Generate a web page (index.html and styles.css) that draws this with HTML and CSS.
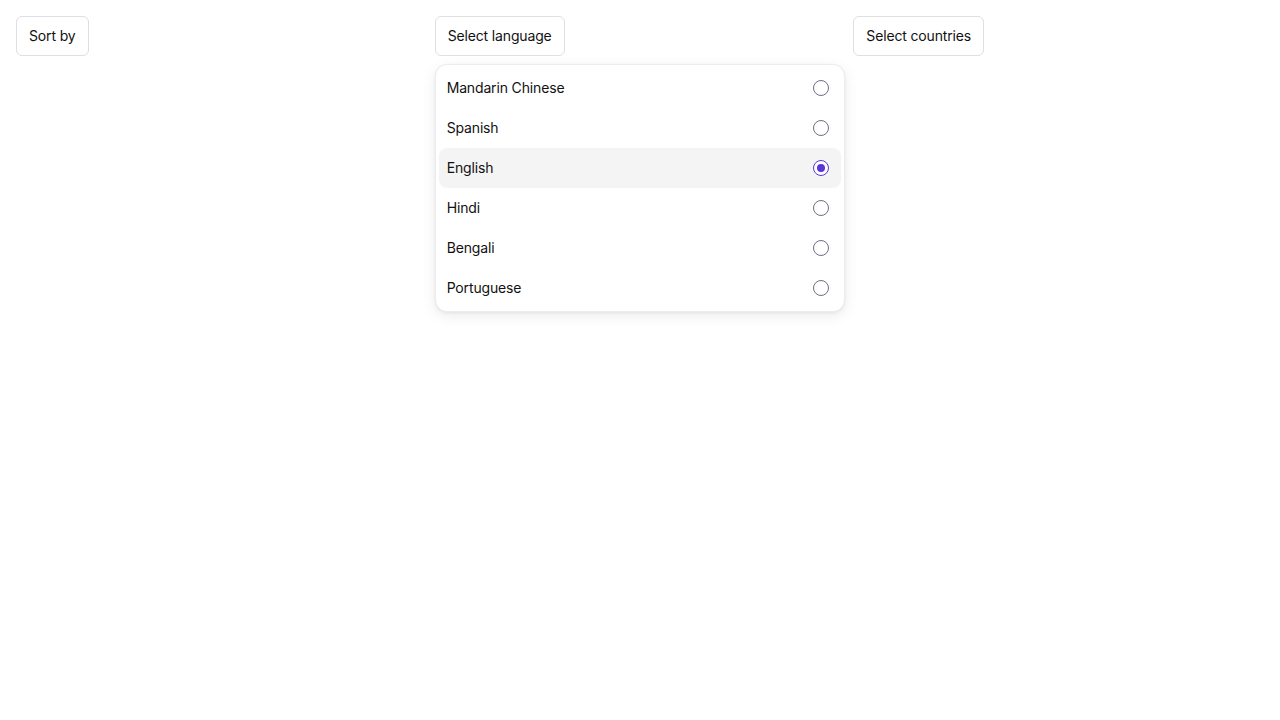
FILE: index.html
```html
<!DOCTYPE html>
<html lang="en">
<head>
<meta charset="utf-8">
<title>Menus</title>
<link rel="stylesheet" href="styles.css">
</head>
<body>
<div class="grid">
  <div class="col">
    <button class="trigger">Sort by</button>
  </div>
  <div class="col">
    <button class="trigger">Select language</button>
    <div class="menu" role="radiogroup">
      <div class="item"><span>Mandarin Chinese</span><span class="radio"></span></div>
      <div class="item"><span>Spanish</span><span class="radio"></span></div>
      <div class="item active"><span>English</span><span class="radio checked"></span></div>
      <div class="item"><span>Hindi</span><span class="radio"></span></div>
      <div class="item"><span>Bengali</span><span class="radio"></span></div>
      <div class="item"><span>Portuguese</span><span class="radio"></span></div>
    </div>
  </div>
  <div class="col">
    <button class="trigger">Select countries</button>
  </div>
</div>
</body>
</html>
```

FILE: styles.css
```css
* { box-sizing: border-box; }
html, body { margin: 0; background: #fff; }
body {
  font-family: Inter, "Noto Sans", sans-serif;
  font-size: 14px;
  letter-spacing: -0.15px;
  color: #111;
  min-height: 720px;
}
.grid {
  display: grid;
  grid-template-columns: repeat(3, 1fr);
  gap: 8px;
  padding: 16px;
  align-items: start;
}
.col {
  display: flex;
  flex-direction: column;
  align-items: flex-start;
  gap: 8px;
}
.trigger {
  height: 40px;
  padding: 0 12px;
  border: 1px solid #dedee3;
  border-radius: 6px;
  background: #fff;
  font-family: inherit;
  font-size: 14px;
  letter-spacing: inherit;
  color: #111;
  line-height: 20px;
}
.menu {
  align-self: stretch;
  background: #fff;
  border: 1px solid #ececef;
  border-radius: 12px;
  padding: 3px;
  box-shadow: 0 4px 14px rgba(0,0,0,0.08), 0 1px 3px rgba(0,0,0,0.06);
}
.item {
  height: 40px;
  display: flex;
  align-items: center;
  justify-content: space-between;
  padding: 0 12px 0 8px;
  border-radius: 8px;
  line-height: 20px;
}
.item.active { background: #f4f4f4; }
.radio {
  width: 16px;
  height: 16px;
  border-radius: 50%;
  border: 1px solid #6e6e82;
  display: flex;
  align-items: center;
  justify-content: center;
  background: #fff;
}
.radio.checked { border-color: #5a35d9; }
.radio.checked::after {
  content: "";
  width: 8px;
  height: 8px;
  border-radius: 50%;
  background: #5a35d9;
}
```
